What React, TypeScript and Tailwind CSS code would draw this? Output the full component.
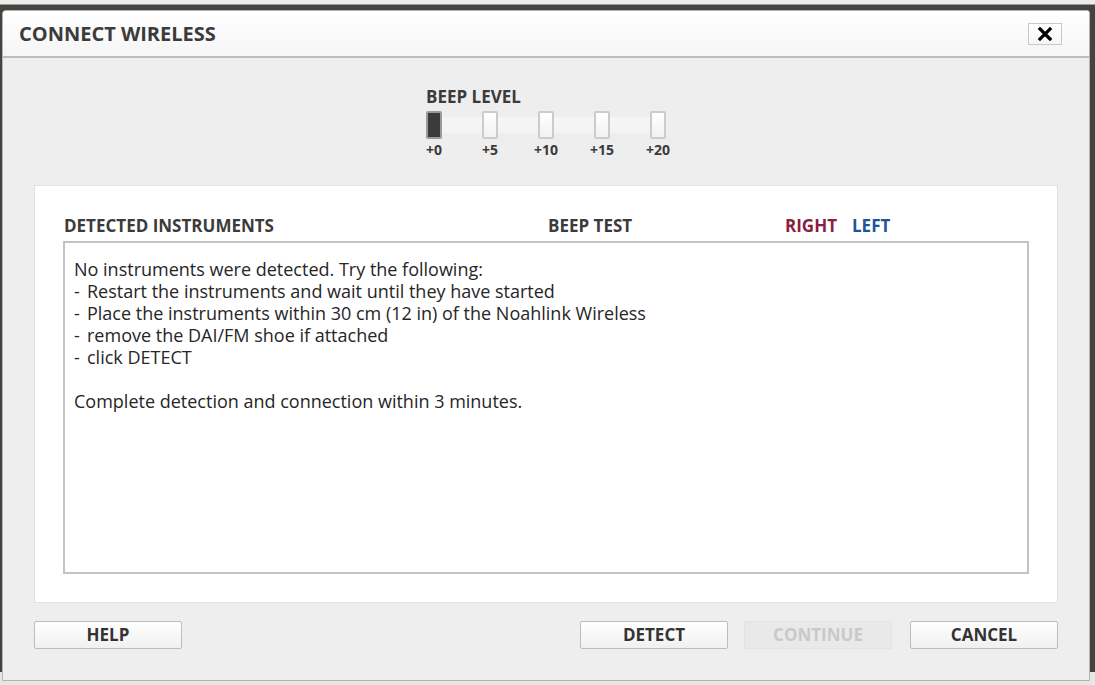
import React from "react";

const FONT = "font-['Open_Sans','Noto_Sans','Liberation_Sans',sans-serif]";

const levels = ["+0", "+5", "+10", "+15", "+20"];

const lines: { text: string; dash?: boolean }[] = [
  { text: "No instruments were detected. Try the following:" },
  { text: "Restart the instruments and wait until they have started", dash: true },
  { text: "Place the instruments within 30 cm (12 in) of the Noahlink Wireless", dash: true },
  { text: "remove the DAI/FM shoe if attached", dash: true },
  { text: "click DETECT", dash: true },
  { text: "" },
  { text: "Complete detection and connection within 3 minutes." },
];

const Button = ({ label, disabled }: { label: string; disabled?: boolean }) => (
  <button
    className={
      disabled
        ? "w-[148px] h-[28px] rounded-[2px] border border-[#e3e3e3] bg-[#e9e9e9] text-[17px] font-bold text-[#c9c9c9]"
        : "w-[148px] h-[28px] rounded-[2px] border border-[#bdbdbd] bg-gradient-to-b from-white to-[#f0f0f0] text-[17px] font-bold text-[#333]"
    }
  >
    {label}
  </button>
);

export default function App() {
  return (
    <div
      className={`${FONT} w-[1095px] h-[685px] overflow-hidden pt-[10px] pl-[2px] bg-[linear-gradient(to_bottom,#ececec_0px,#ececec_4px,#42453f_5px,#42453f_672px,#e6e6e6_672px)]`}
    >
      <div className="w-[1088px] h-[671px] flex flex-col rounded-tl-[4px] rounded-tr-[3px] border border-[#b3b3b3] bg-[#eeeeee] overflow-hidden">
        {/* title bar */}
        <div className="h-[47px] shrink-0 flex items-center justify-between pl-[16px] pr-[27px] bg-gradient-to-b from-white to-[#f5f5f5] border-b-2 border-[#bcbcbc]">
          <span className="text-[20px] font-bold text-[#3b3b3b] pt-[1px]">CONNECT WIRELESS</span>
          <button className="w-[34px] h-[22px] mt-[1px] flex items-center justify-center border border-[#c9c9c9] bg-gradient-to-b from-white to-[#f6f6f6]">
            <svg width="16" height="14" viewBox="0 0 16 14">
              <path d="M3 2 L13 12 M13 2 L3 12" stroke="#000" strokeWidth="3.2" strokeLinecap="square" />
            </svg>
          </button>
        </div>

        {/* beep level */}
        <div className="pl-[423px] pt-[28px] h-[127px] shrink-0">
          <div className="text-[17px] font-bold text-[#3b3b3b] leading-[22px]">BEEP LEVEL</div>
          <div className="relative mt-[3px] h-[28px] flex">
            <div className="absolute left-[16px] top-[6px] w-[224px] h-[16px] bg-[#f4f4f4]" />
            {levels.map((l, i) => (
              <div
                key={l}
                className={
                  i === 0
                    ? "relative shrink-0 w-[16px] h-[28px] mr-[40px] rounded-[2px] border-2 border-[#9a9a9a] bg-[#3b3b3b]"
                    : "relative shrink-0 w-[16px] h-[28px] mr-[40px] rounded-[2px] border-2 border-[#cccccc] bg-gradient-to-b from-white to-[#f2f2f2]"
                }
              />
            ))}
          </div>
          <div className="flex mt-[1px] -ml-[20px]">
            {levels.map((l) => (
              <div key={l} className="w-[56px] shrink-0 text-center text-[14px] font-bold text-[#3b3b3b] leading-[20px]">
                {l}
              </div>
            ))}
          </div>
        </div>

        {/* panel */}
        <div className="mx-[31px] h-[418px] shrink-0 border border-[#e2e2e2] bg-white px-[28px] pt-[24px] flex flex-col">
          <div className="flex items-center h-[31px] pl-[1px] text-[17px] font-bold text-[#3b3b3b]">
            <span className="w-[484px]">DETECTED INSTRUMENTS</span>
            <span className="w-[237px]">BEEP TEST</span>
            <span className="w-[67px] text-[#8c1d43]">RIGHT</span>
            <span className="text-[#1d5698]">LEFT</span>
          </div>
          <div className="h-[333px] border-2 border-[#c3c3c3] px-[9px] pt-[15px] text-[18px] leading-[22px] text-[#262626]">
            {lines.map((l, i) => (
              <div key={i} className="h-[22px] flex whitespace-pre">
                {l.dash && <span className="w-[13px] shrink-0">-</span>}
                <span>{l.text}</span>
              </div>
            ))}
          </div>
        </div>

        {/* buttons */}
        <div className="mx-[31px] mt-[18px] flex items-center">
          <Button label="HELP" />
          <div className="flex-1" />
          <Button label="DETECT" />
          <div className="w-[16px]" />
          <Button label="CONTINUE" disabled />
          <div className="w-[18px]" />
          <Button label="CANCEL" />
        </div>
      </div>
    </div>
  );
}
